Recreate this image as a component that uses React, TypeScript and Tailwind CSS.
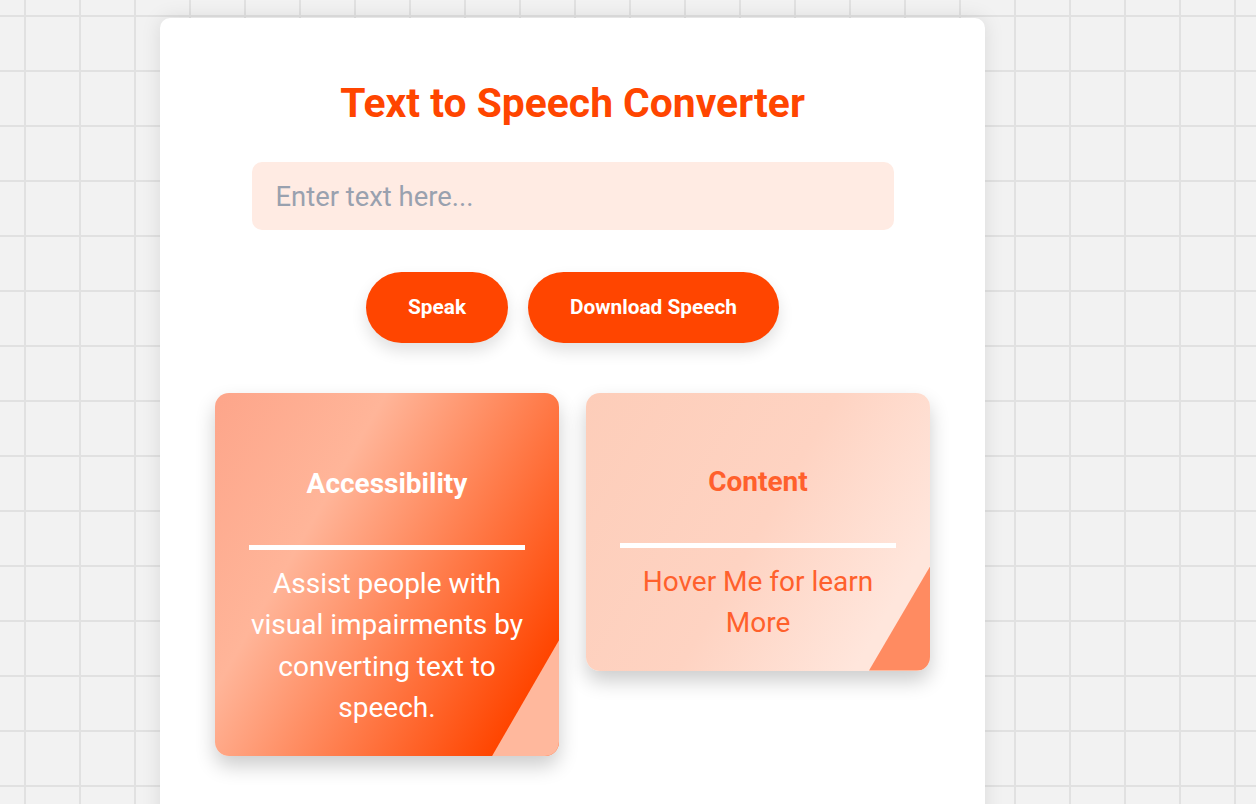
import React, { useState } from "react";

type InfoCard = {
  title: string;
  text: string;
  dark: boolean;
};

const cards: InfoCard[] = [
  {
    title: "Accessibility",
    text: "Assist people with visual impairments by converting text to speech.",
    dark: true,
  },
  {
    title: "Content",
    text: "Hover Me for learn More",
    dark: false,
  },
];

const FeatureCard = ({ card }: { card: InfoCard }) => {
  const { title, text, dark } = card;

  return (
    <div
      className={
        dark
          ? "relative w-[344px] overflow-hidden rounded-[14px] bg-[linear-gradient(120deg,#fda58a_0%,#ffb599_31%,#ff4500_88%)] px-[34px] pt-[74px] pb-[28px] text-white shadow-[0_10px_20px_rgba(0,0,0,0.2)]"
          : "relative w-[344px] overflow-hidden rounded-[14px] bg-[linear-gradient(120deg,#fdcdb9_0%,#fed3c2_50%,#ffe6dc_85%)] px-[34px] pt-[72px] pb-[27px] text-[#ff602c] shadow-[0_10px_20px_rgba(0,0,0,0.2)]"
      }
    >
      <div
        className={
          dark
            ? "absolute right-0 bottom-0 h-[116px] w-[67px] bg-[#ffb89d] [clip-path:polygon(100%_0,100%_100%,0_100%)]"
            : "absolute right-0 bottom-0 h-[104px] w-[61px] bg-[#ff8b61] [clip-path:polygon(100%_0,100%_100%,0_100%)]"
        }
      />
      <h3 className="relative text-center text-[28px] leading-[33px] font-bold">
        {title}
      </h3>
      <div className="relative mt-[45px] h-[5px] bg-white" />
      <p className="relative mt-[13px] text-center text-[28px] leading-[41.3px]">
        {text}
      </p>
    </div>
  );
};

export default function App() {
  const [value, setValue] = useState("");

  return (
    <div className="min-h-screen overflow-hidden bg-[#f2f2f2] bg-[linear-gradient(#e1e1e1_2px,transparent_2px),linear-gradient(90deg,#e1e1e1_2px,transparent_2px)] bg-size-[55px_55px] bg-position-[24px_15px] font-['Roboto','Liberation_Sans',sans-serif]">
      <div className="mt-[18px] ml-[160px] w-[825px] rounded-[10px] bg-white pt-[61px] pb-[80px] shadow-[0_0_20px_rgba(0,0,0,0.1)]">
        <h1 className="text-center text-[40.8px] leading-[48px] font-bold text-[#ff4500]">
          Text to Speech Converter
        </h1>

        <input
          value={value}
          onChange={(e) => setValue(e.target.value)}
          placeholder="Enter text here..."
          className="mx-auto mt-[35px] block h-[68px] w-[642px] rounded-[10px] bg-[#ffebe3] px-[24px] pt-[2px] text-[27.4px] text-gray-700 outline-none placeholder:text-gray-400"
        />

        <div className="mt-[42px] flex justify-center gap-[20px]">
          <button className="h-[71px] rounded-full bg-[#ff4500] px-[42px] text-[20.8px] font-bold text-white shadow-[0_8px_16px_rgba(0,0,0,0.12)]">
            Speak
          </button>
          <button className="h-[71px] rounded-full bg-[#ff4500] px-[42px] text-[20.8px] font-bold text-white shadow-[0_8px_16px_rgba(0,0,0,0.12)]">
            Download Speech
          </button>
        </div>

        <div className="mt-[50px] flex items-start justify-center gap-[27px]">
          {cards.map((card) => (
            <FeatureCard key={card.title} card={card} />
          ))}
        </div>
      </div>
    </div>
  );
}
